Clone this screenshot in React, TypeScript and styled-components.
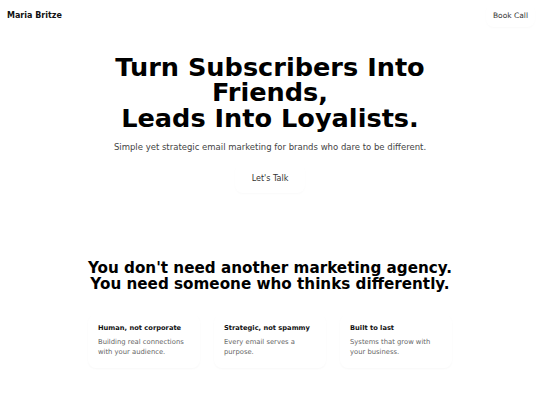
import React from 'react';
import styled, { createGlobalStyle } from 'styled-components';

const GlobalStyle = createGlobalStyle`
  html, body {
    margin: 0;
    padding: 0;
    background: #ffffff;
  }
  body {
    font-family: "DejaVu Sans", Verdana, sans-serif;
    color: #111111;
  }
`;

const Page = styled.div`
  width: 540px;
  min-height: 405px;
  display: flex;
  flex-direction: column;
`;

const Header = styled.header`
  height: 30px;
  display: flex;
  align-items: center;
  justify-content: space-between;
  padding: 0 5px 0 7px;
`;

const Brand = styled.div`
  font-size: 8px;
  font-weight: bold;
  color: #111;
`;

const GhostButton = styled.button<{ $size?: 'sm' | 'md' }>`
  font-family: inherit;
  font-size: ${p => (p.$size === 'md' ? '8px' : '7.5px')};
  color: #333;
  background: #fff;
  border: none;
  border-radius: 8px;
  padding: ${p => (p.$size === 'md' ? '10px 17px' : '7px 7px')};
  box-shadow: 0 1px 2px rgba(0, 0, 0, 0.025);
  cursor: pointer;
`;

const Hero = styled.section`
  display: flex;
  flex-direction: column;
  align-items: center;
  text-align: center;
  padding-top: 25px;
`;

const Headline = styled.h1`
  margin: 0;
  font-size: 25.6px;
  line-height: 25.3px;
  font-weight: bold;
  color: #000;
`;

const Subtitle = styled.p`
  margin: 10px 0 11px;
  font-size: 8.5px;
  line-height: 12px;
  color: #444;
`;

const Manifesto = styled.section`
  display: flex;
  flex-direction: column;
  align-items: center;
  padding-top: 67px;
`;

const SectionTitle = styled.h2`
  margin: 0;
  font-size: 15.2px;
  line-height: 16px;
  font-weight: bold;
  text-align: center;
  color: #000;
`;

const Cards = styled.div`
  display: grid;
  grid-template-columns: repeat(3, 112px);
  gap: 14px;
  margin-top: 22px;
`;

const Card = styled.div`
  padding: 9px 10px 11px;
  border-radius: 8px;
  box-shadow: 0 1px 2px rgba(0, 0, 0, 0.03);
  background: #fff;
`;

const CardTitle = styled.h3`
  margin: 0 0 4px;
  font-size: 6.7px;
  line-height: 10px;
  font-weight: bold;
  white-space: nowrap;
  color: #111;
`;

const CardText = styled.p`
  margin: 0;
  font-size: 6.8px;
  line-height: 10px;
  color: #666;
`;

const values = [
  { title: 'Human, not corporate', text: 'Building real connections with your audience.' },
  { title: 'Strategic, not spammy', text: 'Every email serves a purpose.' },
  { title: 'Built to last', text: 'Systems that grow with your business.' },
];

export default function App() {
  return (
    <Page>
      <GlobalStyle />
      <Header>
        <Brand>Maria Britze</Brand>
        <GhostButton $size="sm">Book Call</GhostButton>
      </Header>
      <Hero>
        <Headline>
          Turn Subscribers Into
          <br />
          Friends,
          <br />
          Leads Into Loyalists.
        </Headline>
        <Subtitle>Simple yet strategic email marketing for brands who dare to be different.</Subtitle>
        <GhostButton $size="md">Let's Talk</GhostButton>
      </Hero>
      <Manifesto>
        <SectionTitle>
          You don't need another marketing agency.
          <br />
          You need someone who thinks differently.
        </SectionTitle>
        <Cards>
          {values.map(v => (
            <Card key={v.title}>
              <CardTitle>{v.title}</CardTitle>
              <CardText>{v.text}</CardText>
            </Card>
          ))}
        </Cards>
      </Manifesto>
    </Page>
  );
}
